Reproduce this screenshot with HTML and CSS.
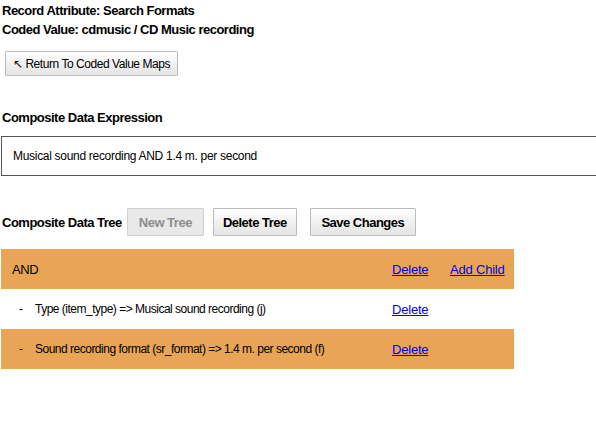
FILE: index.html
```html
<!DOCTYPE html>
<html>
<head>
<meta charset="utf-8">
<link rel="stylesheet" href="styles.css">
</head>
<body>
<div class="page">
  <div class="title">Record Attribute: Search Formats</div>
  <div class="title">Coded Value: cdmusic / CD Music recording</div>
  <div class="back-row"><button class="btn back">&#8598; Return To Coded Value Maps</button></div>
  <div class="section">Composite Data Expression</div>
  <div class="expr">Musical sound recording AND 1.4 m. per second</div>
  <div class="tree-bar">
    <span class="bar-label">Composite Data Tree</span>
    <button class="btn bold new" disabled>New Tree</button>
    <button class="btn bold del">Delete Tree</button>
    <button class="btn bold save">Save Changes</button>
  </div>
  <div class="tree">
    <div class="row odd">
      <span class="label root">AND</span>
      <span class="act"><a href="#">Delete</a></span>
      <span class="act"><a href="#">Add Child</a></span>
    </div>
    <div class="row">
      <span class="dash">-</span>
      <span class="label">Type (item_type) =&gt; Musical sound recording (j)</span>
      <span class="act"><a href="#">Delete</a></span>
    </div>
    <div class="row odd">
      <span class="dash">-</span>
      <span class="label">Sound recording format (sr_format) =&gt; 1.4 m. per second (f)</span>
      <span class="act"><a href="#">Delete</a></span>
    </div>
  </div>
</div>
</body>
</html>
```
FILE: styles.css
```css
html, body { margin: 0; padding: 0; background: #fff; overflow: hidden; }
body {
  font-family: "Liberation Sans", Arial, sans-serif;
  font-size: 13px;
  color: #000;
}
.page { padding: 1px 0 0 2px; }
.title { font-weight: bold; font-size: 13px; letter-spacing: -0.5px; line-height: 19px; }
.back-row { margin-top: 12px; padding-left: 3px; }
.btn {
  box-sizing: border-box;
  font-family: inherit;
  color: #000;
  border: 1px solid #bcbcbc;
  border-radius: 1px;
  background: linear-gradient(#ffffff, #e4e4e4);
  white-space: nowrap;
  padding: 0;
}
.btn.back { height: 25px; width: 173px; font-size: 12px; letter-spacing: -0.45px; }
.btn.bold { font-weight: bold; font-size: 13px; letter-spacing: -0.5px; height: 28px; }
.btn.new { width: 77px; margin-left: 5px; }
.btn.del { width: 84px; margin-left: 9px; }
.btn.save { width: 106px; margin-left: 13px; }
.btn[disabled] { color: #8e8e8e; background: #e9e9e9; border-color: #d0d0d0; }
.section { font-weight: bold; font-size: 13px; letter-spacing: -0.5px; margin-top: 32px; line-height: 19px; }
.expr {
  margin: 9px -8px 0 -1px;
  border: 1px solid #555;
  height: 38px;
  line-height: 38px;
  padding-left: 11px;
  font-size: 12px;
  letter-spacing: -0.3px;
}
.tree-bar { display: flex; align-items: center; margin-top: 32px; }
.bar-label { font-weight: bold; font-size: 13px; letter-spacing: -0.5px; }
.tree { margin: 13px 0 0 -1px; width: 513px; }
.row {
  display: grid;
  grid-template-columns: 34px 357px 58px 1fr;
  align-items: center;
  height: 40px;
}
.row.odd { background: #e8a555; }
.dash { padding-left: 18px; font-size: 12px; }
.label { font-size: 12px; letter-spacing: -0.5px; }
.label.root { grid-column: 1 / 3; padding-left: 11px; font-size: 13px; letter-spacing: -0.4px; }
.act { font-size: 13px; letter-spacing: -0.2px; }
a { color: #0000ee; }
```
